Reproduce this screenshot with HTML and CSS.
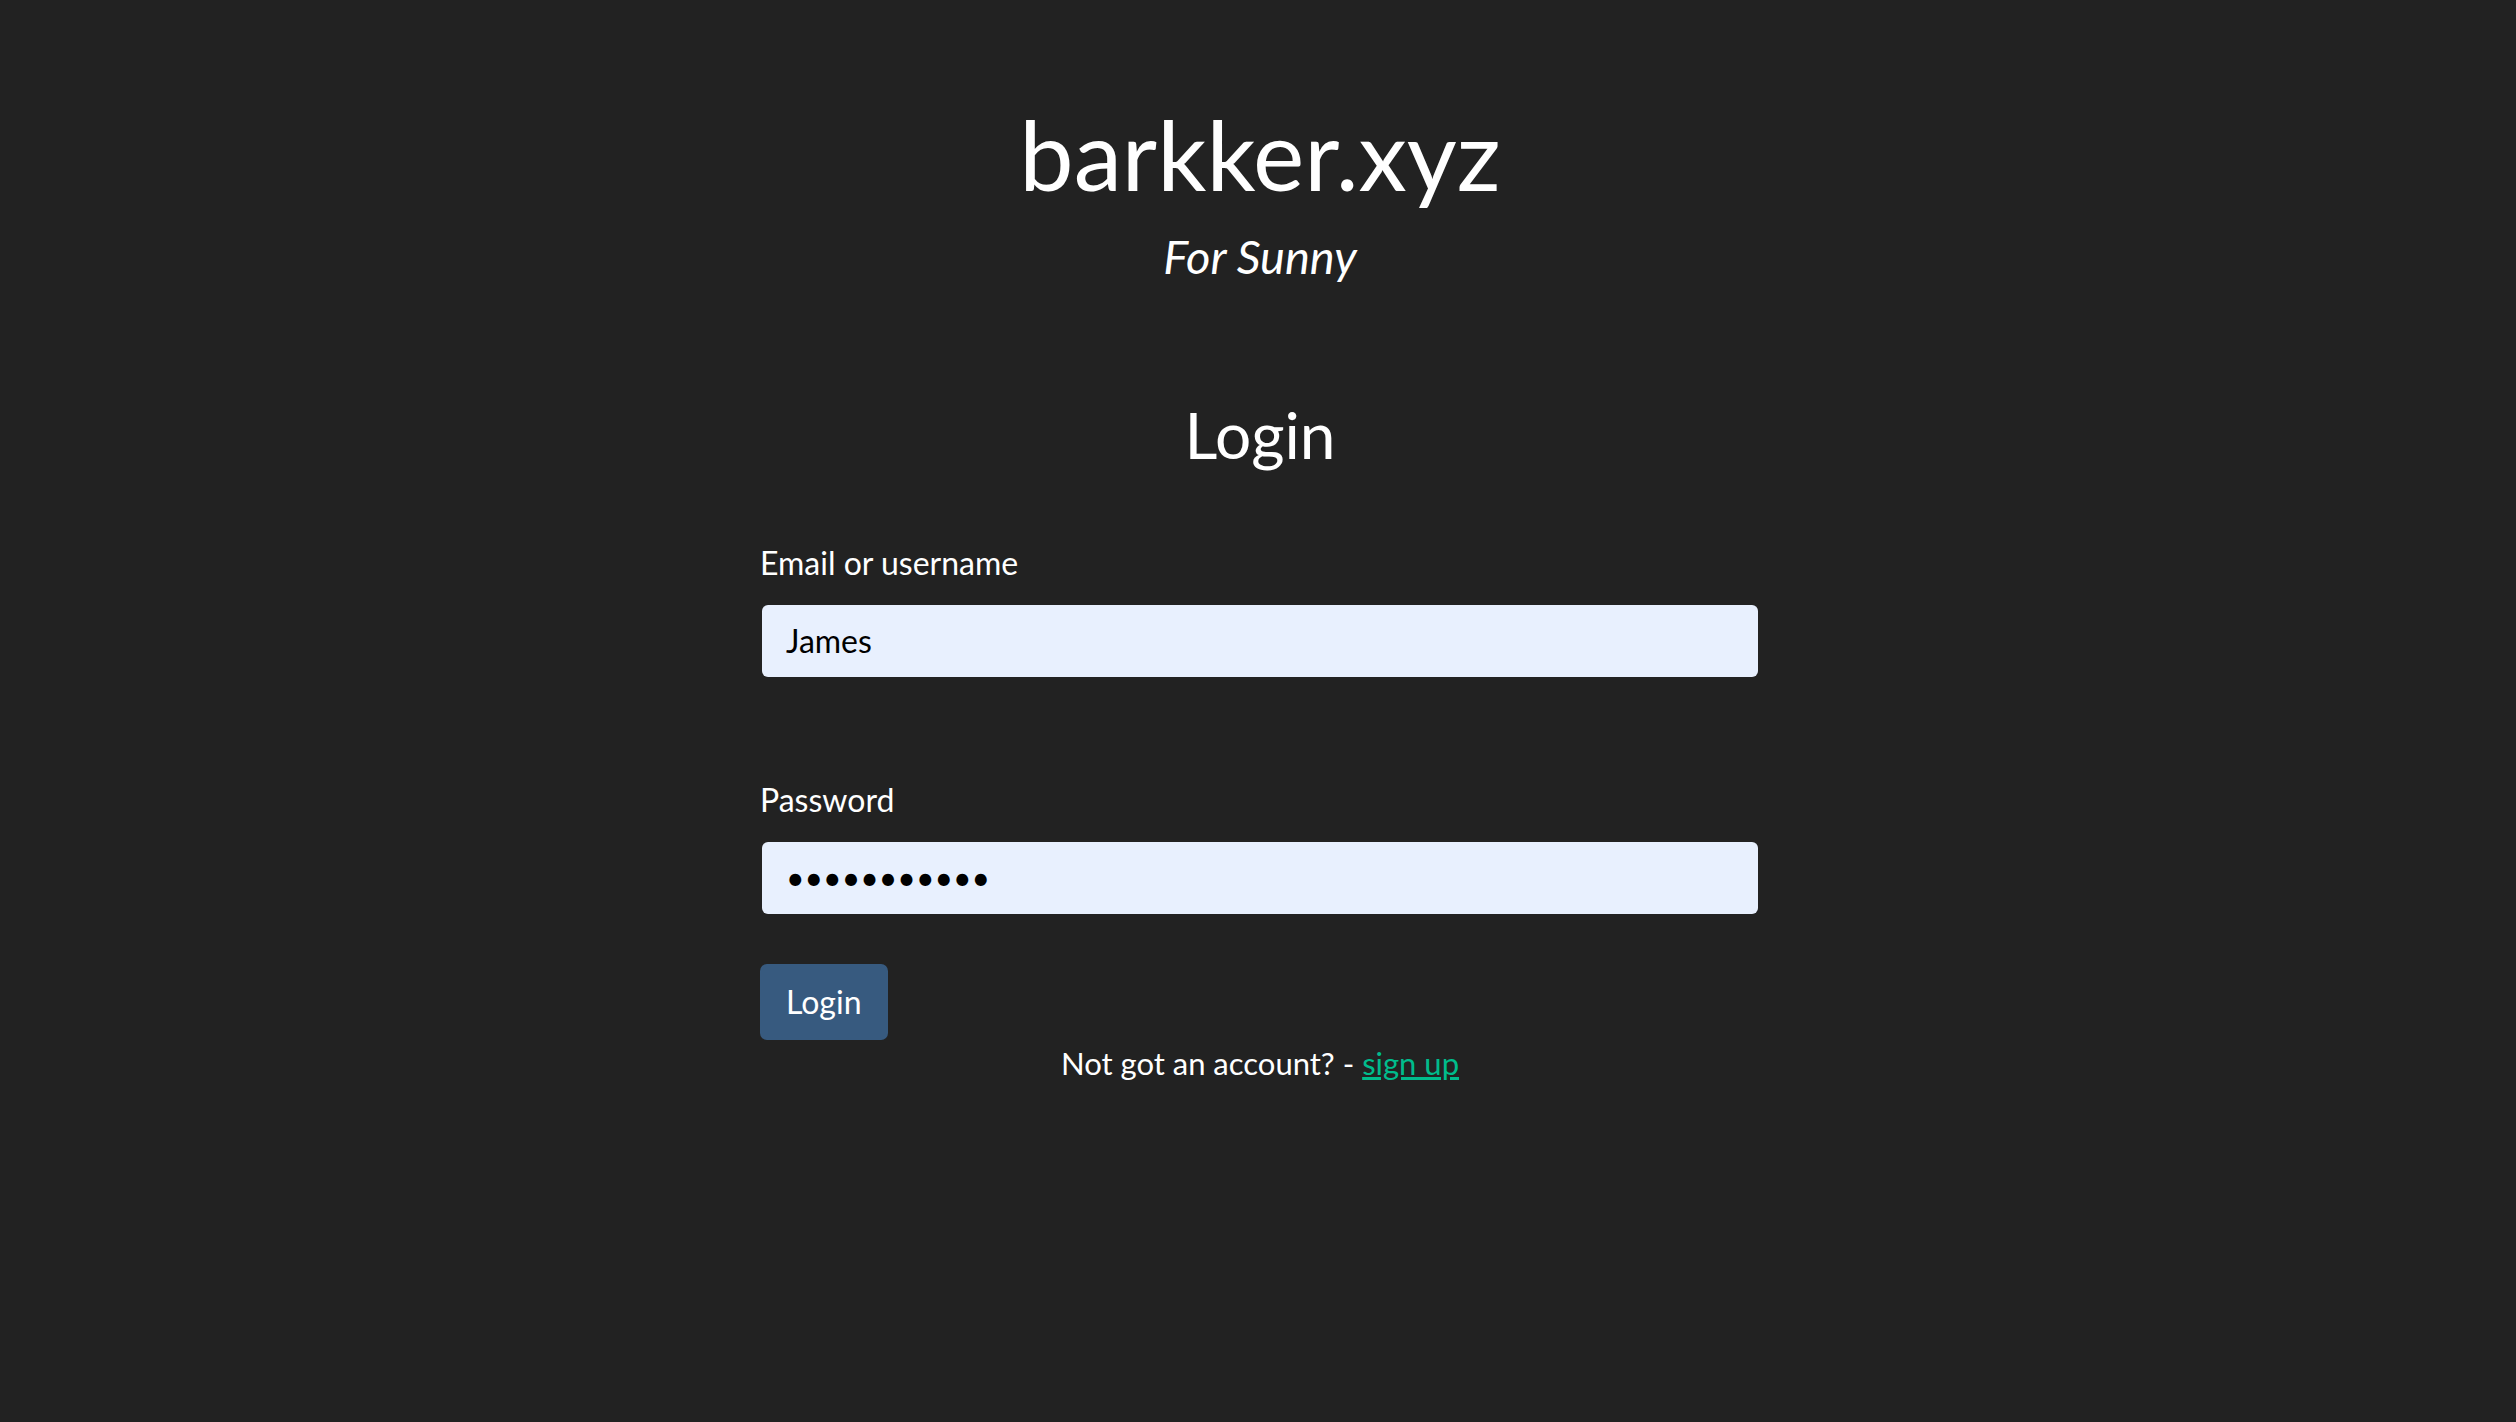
FILE: index.html
```html
<!DOCTYPE html>
<html lang="en">
<head>
<meta charset="utf-8">
<title>barkker.xyz - Login</title>
<link rel="stylesheet" href="styles.css">
</head>
<body>
<main class="page">
  <header class="brand">
    <h1 class="brand-title">barkker.xyz</h1>
    <p class="brand-sub">For Sunny</p>
  </header>
  <section class="login">
    <h2 class="login-title">Login</h2>
    <form class="login-form" onsubmit="return false">
      <div class="field">
        <label class="field-label" for="user">Email or username</label>
        <input class="field-input" id="user" type="text" value="James">
      </div>
      <div class="field field-second">
        <label class="field-label" for="pass">Password</label>
        <input class="field-input" id="pass" type="password" value="sunnysunny1">
      </div>
      <button class="btn-login" type="button">Login</button>
      <p class="signup">Not got an account? - <a class="signup-link" href="#">sign up</a></p>
    </form>
  </section>
</main>
</body>
</html>
```

FILE: styles.css
```css
html, body {
  margin: 0;
  padding: 0;
  background: #222222;
}

body {
  font-family: Lato, "Open Sans", "Liberation Sans", sans-serif;
  color: #ffffff;
  min-height: 1422px;
}

.page {
  padding-top: 96px;
  padding-left: 4px;
}

.brand {
  text-align: center;
}

.brand-title {
  margin: 0;
  font-size: 97px;
  font-weight: 400;
  line-height: 115px;
}

.brand-sub {
  margin: 17px 0 0;
  font-size: 47px;
  font-style: italic;
  line-height: 56px;
}

.login {
  width: 1000px;
  margin: 0 auto;
}

.login-title {
  margin: 113px 0 0;
  text-align: center;
  font-size: 64px;
  font-weight: 400;
  line-height: 1.2;
}

.login-form {
  margin-top: 65px;
  display: flex;
  flex-direction: column;
  align-items: flex-start;
}

.field {
  width: 100%;
  display: flex;
  flex-direction: column;
}

.field-second {
  margin-top: 99px;
}

.field-label {
  font-size: 32px;
  line-height: 48px;
  margin-bottom: 18px;
}

.field-input {
  box-sizing: border-box;
  width: calc(100% - 4px);
  margin: 0 2px;
  height: 72px;
  padding: 0 24px;
  border: 0;
  border-radius: 6px;
  background: #e8f0fe;
  color: #000000;
  font-family: Lato, "Open Sans", "Liberation Sans", sans-serif;
  font-size: 32px;
  outline: none;
}

.btn-login {
  margin-top: 50px;
  height: 76px;
  padding: 0 26px;
  border: 0;
  border-radius: 7px;
  background: #375a7f;
  color: #ffffff;
  font-family: Lato, "Open Sans", "Liberation Sans", sans-serif;
  font-size: 32px;
  line-height: 48px;
  cursor: pointer;
}

.signup {
  align-self: stretch;
  margin: 0;
  text-align: center;
  font-size: 31px;
  line-height: 46px;
}

.signup-link {
  color: #00bc8c;
  text-decoration: underline;
}
```
